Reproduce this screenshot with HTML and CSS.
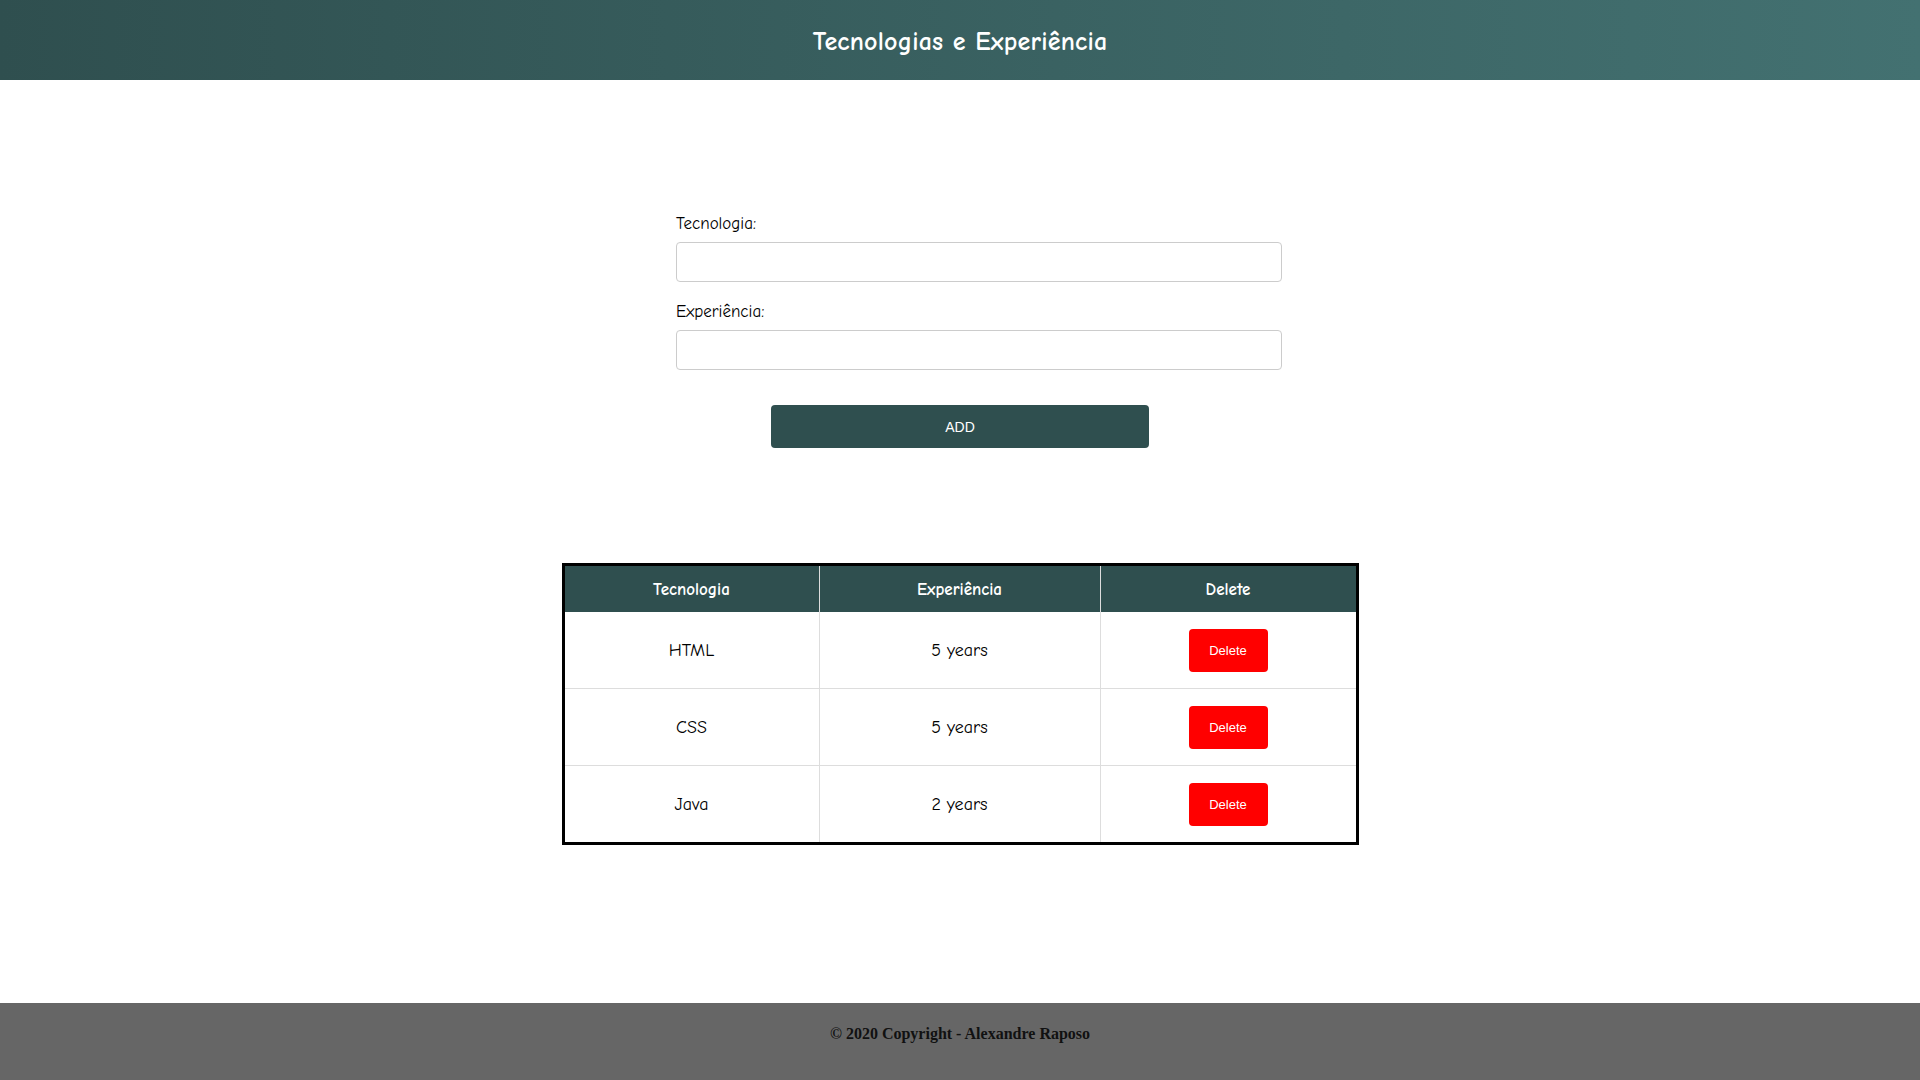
FILE: index.html
```html
<!DOCTYPE html>
<html lang="pt">
<head>
<meta charset="utf-8">
<title>Tecnologias e Experiência</title>
<link rel="stylesheet" href="styles.css">
</head>
<body>
<header class="topbar">
  <h1 class="title">Tecnologias e Experiência</h1>
</header>
<main class="content">
  <form class="form">
    <label class="label" for="tec">Tecnologia:</label>
    <input class="field" id="tec" type="text">
    <label class="label label-second" for="exp">Experiência:</label>
    <input class="field" id="exp" type="text">
  </form>
  <div class="actions">
    <button class="add-btn" type="button">ADD</button>
  </div>
  <table class="grid">
    <thead>
      <tr>
        <th class="col-a">Tecnologia</th>
        <th class="col-b">Experiência</th>
        <th class="col-c">Delete</th>
      </tr>
    </thead>
    <tbody>
      <tr>
        <td>HTML</td>
        <td>5 years</td>
        <td><button class="del-btn" type="button">Delete</button></td>
      </tr>
      <tr>
        <td>CSS</td>
        <td>5 years</td>
        <td><button class="del-btn" type="button">Delete</button></td>
      </tr>
      <tr>
        <td>Java</td>
        <td>2 years</td>
        <td><button class="del-btn" type="button">Delete</button></td>
      </tr>
    </tbody>
  </table>
</main>
<footer class="footer">
  <p class="copy">© 2020 Copyright - Alexandre Raposo</p>
</footer>
</body>
</html>
```
FILE: styles.css
```css
* { box-sizing: border-box; }

html, body { height: 100%; }

body {
  margin: 0;
  min-height: 100vh;
  display: flex;
  flex-direction: column;
  font-family: "Comic Sans MS", "Comic Neue", "DejaVu Sans", sans-serif;
  color: #000;
  background: #fff;
}

.topbar {
  height: 80px;
  flex: 0 0 80px;
  display: flex;
  align-items: center;
  justify-content: center;
  background: linear-gradient(90deg, #2f4f4f 0%, #3a6262 55%, #437171 100%);
}

.title {
  margin: 0;
  padding-top: 4px;
  color: #fff;
  font-size: 26px;
  font-weight: 700;
  letter-spacing: 0.2px;
}

.content {
  flex: 1 0 auto;
  display: flex;
  flex-direction: column;
  align-items: center;
  padding-top: 133px;
}

.form {
  width: 606px;
  margin-left: 38px;
  display: flex;
  flex-direction: column;
}

.label {
  font-size: 17px;
  line-height: 22px;
  height: 22px;
  margin-bottom: 7px;
  color: #000;
  font-weight: 400;
}

.label-second { margin-top: 19px; margin-bottom: 7px; }

.field {
  width: 606px;
  height: 40px;
  border: 1px solid #ccc;
  border-radius: 4px;
  padding: 0 10px;
  font-size: 14px;
  background: #fff;
}

.actions {
  margin-top: 35px;
  display: flex;
  justify-content: center;
}

.add-btn {
  width: 378px;
  height: 43px;
  border: none;
  border-radius: 4px;
  background: #2f4f4f;
  color: #fff;
  font-family: "Liberation Sans", Arial, sans-serif;
  font-size: 14px;
}

.grid {
  margin-top: 115px;
  width: 797px;
  border: 3px solid #000;
  border-spacing: 0;
  border-collapse: separate;
}

.grid th,
.grid td {
  text-align: center;
  border-right: 1px solid #ddd;
  border-bottom: 1px solid #ddd;
  padding: 0;
}

.grid th:last-child,
.grid td:last-child { border-right: none; }

.grid tbody tr:last-child td { border-bottom: none; }

.grid th {
  height: 46px;
  background: #2f4f4f;
  color: #fff;
  font-size: 17px;
  font-weight: 700;
  border-bottom: none;
}

.col-a { width: 255px; }
.col-b { width: 281px; }
.col-c { width: 255px; }

.grid td {
  height: 77px;
  font-size: 18px;
  color: #000;
  font-weight: 400;
}

.grid tbody tr:last-child td { height: 76px; }

.del-btn {
  width: 79px;
  height: 43px;
  border: none;
  border-radius: 4px;
  background: #ff0000;
  color: #fff;
  font-family: "Liberation Sans", Arial, sans-serif;
  font-size: 13px;
  font-weight: normal;
  vertical-align: middle;
}

.footer {
  flex: 0 0 77px;
  height: 77px;
  background: #666;
  padding-top: 21px;
}

.copy {
  margin: 0;
  text-align: center;
  font-family: "Liberation Serif", "Times New Roman", serif;
  font-weight: bold;
  font-size: 16px;
  line-height: 20px;
  color: #111;
}
```
